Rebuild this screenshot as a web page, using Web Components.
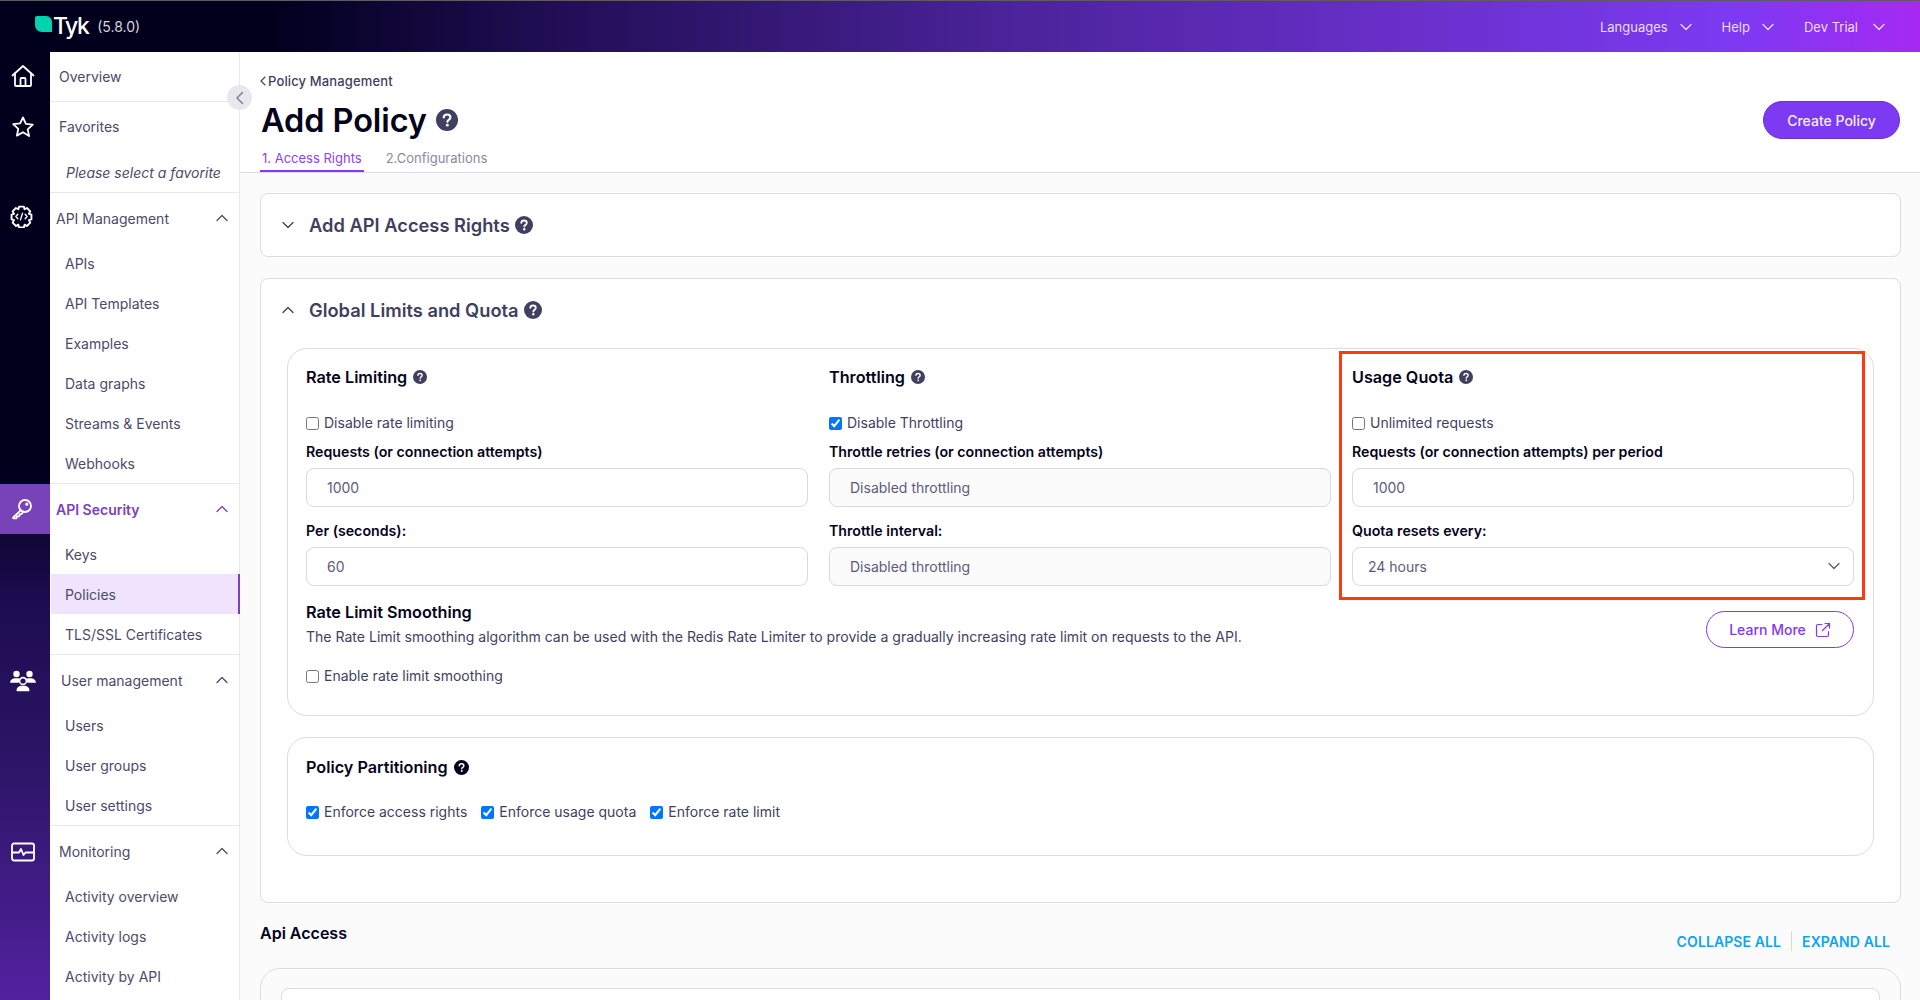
<!DOCTYPE html>
<html lang="en">
<head>
<meta charset="utf-8">
<title>Add Policy</title>
<style>
  html, body { margin: 0; height: 1000px; overflow: hidden; background: #fff; font-family: Inter, "Liberation Sans", sans-serif; }
</style>
</head>
<body>
<tyk-page>
  <tyk-topbar slot="top"></tyk-topbar>
  <tyk-rail slot="rail"></tyk-rail>
  <tyk-sidebar slot="side">
    <nav-link kind="top">Overview</nav-link>
    <nav-fav></nav-fav>
    <nav-group title="API Management" pad="6">
      <nav-link>APIs</nav-link>
      <nav-link>API Templates</nav-link>
      <nav-link>Examples</nav-link>
      <nav-link>Data graphs</nav-link>
      <nav-link>Streams &amp; Events</nav-link>
      <nav-link>Webhooks</nav-link>
    </nav-group>
    <nav-group title="API Security" pad="6" active>
      <nav-link>Keys</nav-link>
      <nav-link current>Policies</nav-link>
      <nav-link>TLS/SSL Certificates</nav-link>
    </nav-group>
    <nav-group title="User management" pad="11">
      <nav-link>Users</nav-link>
      <nav-link>User groups</nav-link>
      <nav-link>User settings</nav-link>
    </nav-group>
    <nav-group title="Monitoring" pad="9">
      <nav-link>Activity overview</nav-link>
      <nav-link>Activity logs</nav-link>
      <nav-link>Activity by API</nav-link>
    </nav-group>
  </tyk-sidebar>
  <policy-header slot="head"></policy-header>
  <policy-content slot="content"></policy-content>
</tyk-page>

<script>
"use strict";

const CHEVRON_UP = '<svg width="14" height="14" viewBox="0 0 14 14" fill="none" stroke="currentColor" stroke-width="1.3" stroke-linecap="round" stroke-linejoin="round"><path d="M2 9.5 7 4.5l5 5"/></svg>';
const CHEVRON_DOWN = '<svg width="14" height="14" viewBox="0 0 14 14" fill="none" stroke="currentColor" stroke-width="1.3" stroke-linecap="round" stroke-linejoin="round"><path d="M2 4.5l5 5 5-5"/></svg>';

class TykPage extends HTMLElement {
  connectedCallback() {
    this.attachShadow({ mode: "open" }).innerHTML = `
      <style>
        :host { display: grid; grid-template-columns: 50px 190px 1fr; grid-template-rows: 52px 1fr; width: 1920px; height: 1000px; overflow: hidden; }
        .top { grid-column: 1 / 4; }
        .main { display: flex; flex-direction: column; min-width: 0; overflow: hidden; background: #fbfbfc; }
      </style>
      <div class="top"><slot name="top"></slot></div>
      <slot name="rail"></slot>
      <slot name="side"></slot>
      <div class="main"><slot name="head"></slot><slot name="content"></slot></div>`;
  }
}

class TykTopbar extends HTMLElement {
  connectedCallback() {
    const menu = (t, gap) => `<span class="menu" style="gap:${gap}px">${t}${CHEVRON_DOWN}</span>`;
    this.attachShadow({ mode: "open" }).innerHTML = `
      <style>
        :host { display: flex; align-items: center; box-sizing: border-box; height: 52px; border-top: 1px solid #5c5c62;
          background: linear-gradient(90deg, #00001c 0%, #00001c 14%, #1f0d52 28%, #4a2398 52%, #6a30cc 74%, #7c3af2 90%, #a629f2 100%);
          color: #e9defc; font-size: 13px; padding: 0 34px 0 35px; }
        .logo { display: flex; align-items: center; }
        .leaf { width: 17px; height: 16px; background: #00d4ae; border-radius: 2px 6px 0 7px; margin-top: -5px; }
        .name { font-size: 23px; font-weight: 500; letter-spacing: -1.5px; color: #fff; margin-left: 1px; margin-top: -2px; }
        .ver { font-size: 14px; color: #d6d6de; margin-left: 9px; }
        .right { margin-left: auto; display: flex; gap: 29px; }
        .menu { display: flex; align-items: center; }
      </style>
      <div class="logo"><div class="leaf"></div><span class="name">Tyk</span><span class="ver">(5.8.0)</span></div>
      <div class="right">${menu("Languages", 11)}${menu("Help", 11)}${menu("Dev Trial", 14)}</div>`;
  }
}

class TykRail extends HTMLElement {
  connectedCallback() {
    const s = 'fill="none" stroke="#fff" stroke-width="1.8" stroke-linecap="round" stroke-linejoin="round"';
    this.attachShadow({ mode: "open" }).innerHTML = `
      <style>
        :host { display: flex; flex-direction: column; background: linear-gradient(180deg, #00001c 0%, #00001c 44%, #1d0c50 58%, #2e1568 76%, #52229f 100%); }
        .i { display: flex; align-items: center; justify-content: center; flex: none; box-sizing: border-box; padding-right: 5px; }
        .on { background: #7843b8; }
      </style>
      <div class="i" style="height:48px"><svg width="24" height="24" viewBox="0 0 24 24" ${s}><path d="M1.5 11.5 12 2l10.5 9.5"/><path d="M4 9.5V21a1 1 0 0 0 1 1h14a1 1 0 0 0 1-1V9.5"/><path d="M9.5 22v-7a1 1 0 0 1 1-1h3a1 1 0 0 1 1 1v7"/></svg></div>
      <div class="i" style="height:53px"><svg width="24" height="24" viewBox="0 0 24 24" ${s}><path d="M12 2.5l2.9 6.3 6.900.8-5.100 4.700 1.400 6.800L12 17.200 5.900 20.600l1.400-6.800-5.100-4.700 6.900-.8z"/></svg></div>
      <div style="height:38px;flex:none"></div>
      <div class="i" style="height:51px;padding-right:7px"><svg width="23" height="23" viewBox="0 0 22 22" ${s} stroke-width="1.6"><path d="M8.700 1.500h4.600l.6 2.600 2.300-1.200 3.200 3.200-1.300 2.300 2.400.8v4.600l-2.400.7 1.300 2.400-3.200 3.200-2.300-1.300-.6 2.700H8.700l-.7-2.700-2.300 1.300-3.200-3.200 1.300-2.400-2.300-.7V9.200l2.300-.8-1.300-2.300 3.200-3.200L8 4.100z"/><path d="M7.500 8.800 5.600 11l1.900 2.200M14.500 8.800l1.900 2.200-1.900 2.200M12 7.800l-2 6.400" stroke-width="1.300"/></svg></div>
      <div style="height:242px;flex:none"></div>
      <div class="i on" style="height:50px;padding-right:6px"><svg width="22" height="22" viewBox="0 0 22 22" ${s}><circle cx="14" cy="8" r="6"/><circle cx="15.800" cy="6.200" r=".7" fill="#fff"/><path d="M9.700 12.300 2.200 19.500v.8h3.300l.5-2h2.200l.5-2 1.800-.3 1-1.200"/></svg></div>
      <div style="height:121px;flex:none"></div>
      <div class="i" style="height:50px;padding-top:1px"><svg width="26" height="22" viewBox="0 0 26 22" fill="#fff" stroke="none"><circle cx="6.500" cy="4" r="3.200"/><circle cx="19.500" cy="4" r="3.200"/><path d="M0 12.800C.3 10 2.400 8.300 5 8.300h3c.9 0 1.600.2 2.300.6a6 6 0 0 0-1.600 3.900z"/><path d="M26 12.800c-.3-2.800-2.400-4.500-5-4.500h-3c-.9 0-1.600.2-2.300.6a6 6 0 0 1 1.600 3.900z"/><circle cx="13" cy="11" r="3.400" fill="none" stroke="#fff" stroke-width="1.600"/><path d="M6.500 20.300c.2-3 2.600-4.600 5-4.600h3c2.400 0 4.800 1.600 5 4.600 0 .6-.4 1-1 1h-11c-.6 0-1-.4-1-1z"/></svg></div>
      <div style="height:121px;flex:none"></div>
      <div class="i" style="height:50px;padding-top:1px"><svg width="24" height="20" viewBox="0 0 24 20" ${s} stroke-width="1.5"><rect x="1" y="1.500" width="22" height="17" rx="2"/><path d="M1.500 10.500H8l2-3.500 2.500 6 2-2.500H22.500"/></svg></div>`;
  }
}

class TykSidebar extends HTMLElement {
  connectedCallback() {
    this.attachShadow({ mode: "open" }).innerHTML = `
      <style>
        :host { display: flex; flex-direction: column; position: relative; box-sizing: border-box; background: #fff; border-right: 1px solid #e8e8ee; color: #4b4b69; font-size: 14px; min-height: 0; }
        .toggle { position: absolute; right: -13px; top: 33px; width: 25px; height: 25px; border-radius: 50%; background: #e8e8ec; color: #77778a; display: flex; align-items: center; justify-content: center; z-index: 2; }
      </style>
      <slot></slot>
      <div class="toggle"><svg width="14" height="14" viewBox="0 0 14 14" fill="none" stroke="currentColor" stroke-width="1.4" stroke-linecap="round" stroke-linejoin="round"><path d="M9.500 1.500 4 7l5.500 5.500"/></svg></div>`;
  }
}

class NavLink extends HTMLElement {
  connectedCallback() {
    this.attachShadow({ mode: "open" }).innerHTML = `
      <style>
        :host { display: flex; align-items: center; box-sizing: border-box; height: 40px; padding-left: 15px; flex: none; }
        :host([kind="top"]) { height: 50px; padding-left: 9px; border-bottom: 1px solid #e8e8ee; }
        :host([current]) { background: #f0e4fc; border-right: 2px solid #7a3fc4; margin-right: -1px; margin-left: 1px; padding-left: 14px; }
      </style>
      <slot></slot>`;
  }
}

class NavFav extends HTMLElement {
  connectedCallback() {
    this.attachShadow({ mode: "open" }).innerHTML = `
      <style>
        :host { display: flex; flex-direction: column; box-sizing: border-box; height: 91px; border-bottom: 1px solid #e8e8ee; flex: none; padding-left: 9px; }
        .a { line-height: 50px; }
        .b { font-style: italic; padding-left: 7px; line-height: 39px; margin-top: 1px; }
      </style>
      <div class="a">Favorites</div><div class="b">Please select a favorite</div>`;
  }
}

class NavGroup extends HTMLElement {
  connectedCallback() {
    const on = this.hasAttribute("active");
    this.attachShadow({ mode: "open" }).innerHTML = `
      <style>
        :host { display: block; flex: none; border-bottom: 1px solid #e8e8ee; }
        :host(:last-child) { border-bottom: 0; }
        .h { display: flex; align-items: center; justify-content: space-between; height: 50px; padding: 0 10px 0 ${this.getAttribute("pad")}px; box-sizing: border-box; }
        .on { color: #7a3fc4; font-weight: 600; }
        svg { display: block; }
      </style>
      <div class="h ${on ? "on" : ""}"><span>${this.getAttribute("title")}</span>${CHEVRON_UP}</div>
      <slot></slot>`;
  }
}

class TykHelp extends HTMLElement {
  connectedCallback() {
    const size = this.getAttribute("size") || 14;
    const color = this.getAttribute("color") || "#3f3f5f";
    this.attachShadow({ mode: "open" }).innerHTML = `
      <style>:host { display: inline-flex; flex: none; } svg { display: block; }</style>
      <svg width="${size}" height="${size}" viewBox="0 0 20 20"><circle cx="10" cy="10" r="10" fill="${color}"/><path d="M7 7.600C7.100 5.900 8.400 5 10.100 5c1.800 0 3 1 3 2.600 0 1.200-.7 1.800-1.500 2.300-.9.5-1.200.9-1.200 1.800" fill="none" stroke="#fff" stroke-width="2" stroke-linecap="round"/><circle cx="10.300" cy="14.700" r="1.300" fill="#fff"/></svg>`;
  }
}

class PolicyHeader extends HTMLElement {
  connectedCallback() {
    this.attachShadow({ mode: "open" }).innerHTML = `
      <style>
        :host { display: flex; justify-content: space-between; box-sizing: border-box; height: 121px; flex: none; padding: 0 20px; background: #fff; border-bottom: 1px solid #dcdce2; position: relative; }
        .crumb { display: flex; align-items: center; gap: 2px; height: 20px; margin-top: 19px; font-size: 13px; font-weight: 500; color: #3f3f5f; letter-spacing: .14px; }
        h1 { display: flex; align-items: center; gap: 9px; margin: 0; height: 36px; margin-top: 11px; font-size: 32.5px; font-weight: 600; color: #03031c; letter-spacing: -.1px; padding-left: 1px; }
        .tabs { display: flex; gap: 20px; font-size: 13px; margin-top: 12px; color: #8a8a9a; }
        .tabs span { display: block; box-sizing: border-box; height: 22px; padding: 0 2px; }
        .tabs .on { color: #8a3ffc; border-bottom: 2px solid #8438f6; }
        .btn { align-self: flex-start; margin-top: 49px; width: 137px; height: 38px; border-radius: 19px; background: #7c3af2; color: #f4edff; border: 1px solid #6a30d0; box-sizing: border-box; font-size: 14px; font-weight: 500; display: flex; align-items: center; justify-content: center; }
      </style>
      <div>
        <div class="crumb"><svg width="6" height="10" viewBox="0 0 6 10" fill="none" stroke="#3f3f5f" stroke-width="1.1" stroke-linecap="round" stroke-linejoin="round"><path d="M5 1 1 5l4 4"/></svg>Policy Management</div>
        <h1>Add Policy <tyk-help size="22"></tyk-help></h1>
        <div class="tabs"><span class="on">1. Access Rights</span><span>2.Configurations</span></div>
      </div>
      <div class="btn">Create Policy</div>`;
  }
}

class TykField extends HTMLElement {
  connectedCallback() {
    const off = this.hasAttribute("disabled");
    const sel = this.hasAttribute("select");
    this.attachShadow({ mode: "open" }).innerHTML = `
      <style>
        :host { display: block; }
        label { display: block; font-size: 14.2px; font-weight: 600; color: #03031c; line-height: 20px; height: 20px; margin-bottom: 6px; }
        .box { display: flex; align-items: center; justify-content: space-between; box-sizing: border-box; height: 39px; border: 1px solid #d8d8e0; border-radius: 8px; padding: 0 10px 0 20px; font-size: 14px; color: #5c5c78; background: ${off ? "#fbfbfb" : "#fff"}; }
        .sel { padding: 0 12px 1px 15px; }
      </style>
      <label>${this.getAttribute("label")}</label>
      <div class="box ${sel ? "sel" : ""}"><span>${this.getAttribute("value")}</span>${sel ? CHEVRON_DOWN : ""}</div>`;
  }
}

class TykCheck extends HTMLElement {
  connectedCallback() {
    this.attachShadow({ mode: "open" }).innerHTML = `
      <style>
        :host { display: inline-flex; align-items: center; gap: 5px; font-size: 14px; color: #3f3f5f; height: 20px; }
        input { margin: 3px 0 0 0; width: 13px; height: 13px; flex: none; }
      </style>
      <input type="checkbox" ${this.hasAttribute("checked") ? "checked" : ""}><span><slot></slot></span>`;
  }
}

class LimitColumn extends HTMLElement {
  connectedCallback() {
    this.attachShadow({ mode: "open" }).innerHTML = `
      <style>
        :host { display: flex; flex-direction: column; min-width: 0; }
        .t { display: flex; align-items: center; gap: 6px; font-size: 16.2px; font-weight: 600; color: #03031c; height: 24px; margin-bottom: 23px; }
        .c { margin-bottom: 8px; }
        ::slotted(tyk-field:last-child) { margin-top: 14px; }
      </style>
      <div class="t"><span>${this.getAttribute("title")}</span><tyk-help size="14"></tyk-help></div>
      <div class="c"><slot name="check"></slot></div>
      <slot></slot>`;
  }
}

class SectionCard extends HTMLElement {
  connectedCallback() {
    const open = this.hasAttribute("open");
    this.attachShadow({ mode: "open" }).innerHTML = `
      <style>
        :host { display: block; background: #fff; border: 1px solid #dcdce2; border-radius: 8px; box-sizing: border-box; }
        .h { display: flex; align-items: center; height: 62px; padding-left: 20px; font-size: 18.3px; font-weight: 600; color: #3f3f5f; gap: 5px; }
        .h svg.c { margin-right: 9px; }
        .h > svg { color: #3f3f5f; }
      </style>
      <div class="h">${(open ? CHEVRON_UP : CHEVRON_DOWN).replace("<svg", '<svg class="c"')}<span>${this.getAttribute("title")}</span><tyk-help size="18"></tyk-help></div>
      <slot></slot>`;
  }
}

class PolicyContent extends HTMLElement {
  connectedCallback() {
    this.attachShadow({ mode: "open" }).innerHTML = `
      <style>
        :host { display: block; padding: 20px 19px 0 20px; }
        .inner { border: 1px solid #dcdce2; border-radius: 20px; margin: 0 26px 0 26px; box-sizing: border-box; padding: 0 18px 0 18px; background: #fff; }
        .limits { height: 368px; padding-top: 16px; margin-top: 7px; }
        .cols { display: grid; grid-template-columns: 502px 502px 502px; gap: 21px; }
        .smooth { display: flex; justify-content: space-between; margin-top: 16px; }
        .smooth h3 { margin: 0; font-size: 16.2px; font-weight: 600; color: #03031c; line-height: 20px; }
        .smooth p { margin: 6px 0 19px; font-size: 14.05px; color: #3f3f5f; line-height: 18px; }
        .learn { width: 148px; height: 37px; box-sizing: border-box; border: 1px solid #8438f6; border-radius: 19px; color: #8438f6; font-size: 14px; font-weight: 500; display: flex; align-items: center; justify-content: center; gap: 9px; margin: 9px 1px 0 0; }
        .part { height: 119px; margin-top: 21px; padding-top: 17px; }
        .part .t { display: flex; align-items: center; gap: 6px; font-size: 16.2px; font-weight: 600; color: #03031c; height: 24px; margin-bottom: 22px; }
        .part .r { display: flex; gap: 14px; }
        .api { display: flex; justify-content: space-between; height: 65px; }
        .api b { font-size: 16px; font-weight: 600; color: #03031c; margin-top: 20px; line-height: 20px; }
        .links { display: flex; align-items: center; height: 20px; margin: 28px 11px 0 0; color: #0ea5ee; font-size: 14px; font-weight: 600; letter-spacing: .1px; }
        .links i { display: block; width: 1px; height: 20px; background: #d8d8e0; margin: 0 10px; }
        .outer { border: 1px solid #dcdce2; border-radius: 20px 20px 0 0; height: 80px; padding: 19px 20px 0 20px; box-sizing: border-box; }
        .row { background: #fff; border: 1px solid #dcdce2; border-radius: 8px; height: 60px; }
        .limitscard { height: 625px; }
        .mark { position: absolute; left: 1339px; top: 351px; width: 526px; height: 249px; border: 3px solid #ff3a0f; box-sizing: border-box; pointer-events: none; }
      </style>
      <section-card title="Add API Access Rights" style="height:64px"></section-card>
      <section-card class="limitscard" title="Global Limits and Quota" open style="margin-top:21px">
        <div class="inner limits">
          <div class="cols">
            <limit-column title="Rate Limiting">
              <tyk-check slot="check">Disable rate limiting</tyk-check>
              <tyk-field label="Requests (or connection attempts)" value="1000"></tyk-field>
              <tyk-field label="Per (seconds):" value="60"></tyk-field>
            </limit-column>
            <limit-column title="Throttling">
              <tyk-check slot="check" checked>Disable Throttling</tyk-check>
              <tyk-field label="Throttle retries (or connection attempts)" value="Disabled throttling" disabled></tyk-field>
              <tyk-field label="Throttle interval:" value="Disabled throttling" disabled></tyk-field>
            </limit-column>
            <limit-column title="Usage Quota">
              <tyk-check slot="check">Unlimited requests</tyk-check>
              <tyk-field label="Requests (or connection attempts) per period" value="1000"></tyk-field>
              <tyk-field label="Quota resets every:" value="24 hours" select></tyk-field>
            </limit-column>
          </div>
          <div class="smooth">
            <div>
              <h3>Rate Limit Smoothing</h3>
              <p>The Rate Limit smoothing algorithm can be used with the Redis Rate Limiter to provide a gradually increasing rate limit on requests to the API.</p>
              <tyk-check>Enable rate limit smoothing</tyk-check>
            </div>
            <div class="learn">Learn More <svg width="16" height="16" viewBox="0 0 16 16" fill="none" stroke="currentColor" stroke-width="1.2" stroke-linecap="round" stroke-linejoin="round"><path d="M7 2.500H3A1.500 1.500 0 0 0 1.500 4v9A1.500 1.500 0 0 0 3 14.500h9a1.500 1.500 0 0 0 1.500-1.500V9.500"/><path d="M10 1.500h4.500V6M14.500 1.500 7.500 8.500"/></svg></div>
          </div>
        </div>
        <div class="inner part">
          <div class="t"><span>Policy Partitioning</span><tyk-help size="15" color="#03031c"></tyk-help></div>
          <div class="r">
            <tyk-check checked>Enforce access rights</tyk-check>
            <tyk-check checked>Enforce usage quota</tyk-check>
            <tyk-check checked>Enforce rate limit</tyk-check>
          </div>
        </div>
      </section-card>
      <div class="api">
        <b>Api Access</b>
        <div class="links"><span>COLLAPSE ALL</span><i></i><span>EXPAND ALL</span></div>
      </div>
      <div class="outer"><div class="row"></div></div>
      <div class="mark"></div>`;
  }
}

customElements.define("tyk-page", TykPage);
customElements.define("tyk-topbar", TykTopbar);
customElements.define("tyk-rail", TykRail);
customElements.define("tyk-sidebar", TykSidebar);
customElements.define("nav-link", NavLink);
customElements.define("nav-fav", NavFav);
customElements.define("nav-group", NavGroup);
customElements.define("tyk-help", TykHelp);
customElements.define("policy-header", PolicyHeader);
customElements.define("tyk-field", TykField);
customElements.define("tyk-check", TykCheck);
customElements.define("limit-column", LimitColumn);
customElements.define("section-card", SectionCard);
customElements.define("policy-content", PolicyContent);
</script>
</body>
</html>
